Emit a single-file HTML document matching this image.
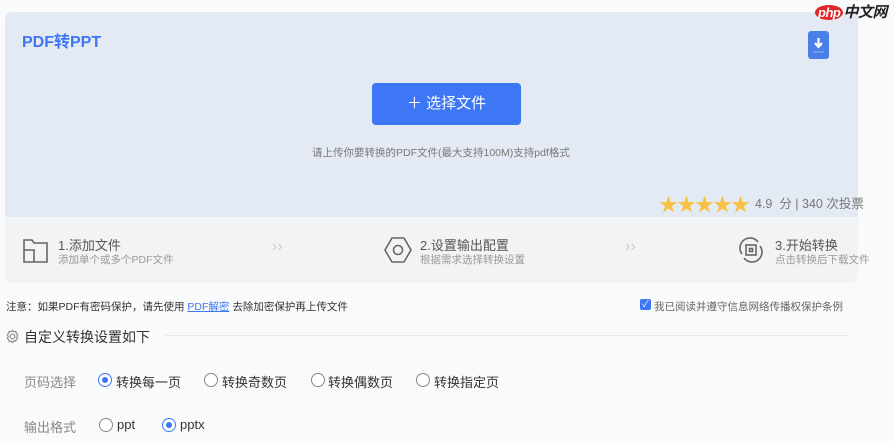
<!DOCTYPE html>
<html><head><meta charset="utf-8"><style>
*{margin:0;padding:0;box-sizing:border-box}
body{width:895px;height:441px;background:#f9fafb;font-family:"Liberation Sans","Noto Sans CJK SC",sans-serif;position:relative;overflow:hidden;color:#333}
.a{position:absolute;white-space:nowrap}
.top{left:5px;top:12px;width:853px;height:206px;background:#e4eaf4;border-radius:6px 6px 0 0}
.steps{left:5px;top:217px;width:853px;height:66px;background:#f2f3f5;border-radius:0 0 8px 8px}
.t1{font-size:13px;color:#555}
.t2{font-size:10.5px;color:#999}
.rad{width:14px;height:14px;border:1px solid #888;border-radius:50%;background:#fff}
.rad.on{border-color:#3e77f5}
.rad.on::after{content:"";position:absolute;left:3px;top:3px;width:6px;height:6px;border-radius:50%;background:#3e77f5}
.opt{font-size:13px;color:#333}
</style></head><body>
<div class="a top"></div>
<div class="a" style="left:22px;top:28px;font-size:16px;font-weight:bold;color:#3e77f5">PDF转PPT</div>
<div class="a" style="left:808px;top:31px;width:21px;height:28px;background:#4a7fe8;border-radius:3px">
<svg width="21" height="28" viewBox="0 0 21 28"><path d="M10.5 7v8M7 12l3.5 4 3.5-4" stroke="#fff" stroke-width="2.2" fill="none"/><line x1="5" y1="21" x2="16" y2="21" stroke="#9fbaf3" stroke-width="1"/></svg></div>
<div class="a" style="left:815px;top:1px;font-size:15px;font-weight:bold;font-style:italic;letter-spacing:-0.5px"><span style="background:#e0262a;color:#fff;border-radius:50%;padding:0 3px;font-size:13px">php</span><span style="color:#222">中文网</span></div>
<div class="a" style="left:372px;top:83px;width:149px;height:42px;background:#3e77f5;border-radius:4px;color:#fff;font-size:15px;line-height:42px;text-align:center">＋ 选择文件</div>
<div class="a" style="left:312px;top:145px;font-size:10.5px;color:#777">请上传你要转换的PDF文件(最大支持100M)支持pdf格式</div>
<div class="a" style="left:659px;top:190px;font-size:19px;color:#f7c242;letter-spacing:-1px">★★★★★</div>
<div class="a" style="left:755px;top:193px;font-size:12.5px;color:#777">4.9 &nbsp;分 | 340 次投票</div>
<div class="a steps"></div>
<svg class="a" style="left:22px;top:237px" width="27" height="27" viewBox="0 0 27 27" fill="none" stroke="#666" stroke-width="1.6"><path d="M2 3h8l2 3h13v19H2z M2 13h10v12"/></svg>
<div class="a t1" style="left:58px;top:235px">1.添加文件</div>
<div class="a t2" style="left:58px;top:252px">添加单个或多个PDF文件</div>
<div class="a" style="left:272px;top:238px;color:#ccc;font-size:16px">››</div>
<svg class="a" style="left:384px;top:236px" width="28" height="28" viewBox="0 0 28 28" fill="none" stroke="#666" stroke-width="1.6"><path d="M8 2h12l7 12-7 12H8L1 14z"/><circle cx="14" cy="14" r="4.5"/></svg>
<div class="a t1" style="left:420px;top:235px">2.设置输出配置</div>
<div class="a t2" style="left:420px;top:252px">根据需求选择转换设置</div>
<div class="a" style="left:625px;top:238px;color:#ccc;font-size:16px">››</div>
<svg class="a" style="left:738px;top:237px" width="26" height="26" viewBox="0 0 26 26" fill="none" stroke="#666" stroke-width="1.6"><path d="M4 17A10 10 0 0 1 20 5M22 9A10 10 0 0 1 6 21"/><rect x="8" y="8" width="10" height="10"/><rect x="11.5" y="11.5" width="3" height="3"/></svg>
<div class="a t1" style="left:775px;top:235px">3.开始转换</div>
<div class="a t2" style="left:775px;top:252px">点击转换后下载文件</div>
<div class="a" style="left:6px;top:299px;font-size:10.5px;color:#333">注意：如果PDF有密码保护，请先使用 <span style="color:#3e77f5;text-decoration:underline">PDF解密</span> 去除加密保护再上传文件</div>
<div class="a" style="left:640px;top:299px;width:11px;height:11px;background:#3e77f5;border-radius:2px;color:#fff;font-size:9px;line-height:11px;text-align:center">✓</div>
<div class="a" style="left:654px;top:299px;font-size:10.5px;color:#666">我已阅读并遵守信息网络传播权保护条例</div>
<svg class="a" style="left:5px;top:329px" width="15" height="15" viewBox="0 0 16 16" fill="none" stroke="#888" stroke-width="1.2"><circle cx="8" cy="8" r="2.5"/><path d="M8 1.5l1.5 1.5 2-.5.5 2 1.5 1.5-1 1.8 1 1.8-1.5 1.5-.5 2-2-.5L8 14.5 6.5 13l-2 .5-.5-2L2.5 10l1-2-1-2L4 4.5l.5-2 2 .5z"/></svg>
<div class="a" style="left:24px;top:327px;font-size:14px;color:#333">自定义转换设置如下</div>
<div class="a" style="left:165px;top:335px;width:683px;height:1px;background:#e8e8e8"></div>
<div class="a" style="left:24px;top:372px;font-size:13px;color:#888">页码选择</div>
<div class="a rad on" style="left:98px;top:373px"></div><div class="a opt" style="left:116px;top:372px">转换每一页</div>
<div class="a rad" style="left:204px;top:373px"></div><div class="a opt" style="left:222px;top:372px">转换奇数页</div>
<div class="a rad" style="left:311px;top:373px"></div><div class="a opt" style="left:328px;top:372px">转换偶数页</div>
<div class="a rad" style="left:416px;top:373px"></div><div class="a opt" style="left:434px;top:372px">转换指定页</div>
<div class="a" style="left:24px;top:417px;font-size:13px;color:#888">输出格式</div>
<div class="a rad" style="left:99px;top:418px"></div><div class="a opt" style="left:117px;top:417px">ppt</div>
<div class="a rad on" style="left:162px;top:418px"></div><div class="a opt" style="left:180px;top:417px">pptx</div>
</body></html>
